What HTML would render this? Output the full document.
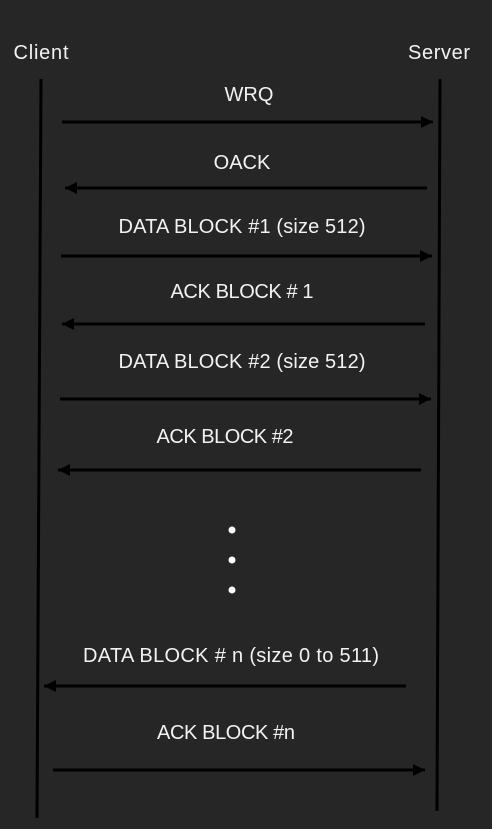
<!DOCTYPE html>
<html><head><style>
html,body{margin:0;padding:0;background:#262626;}
svg{display:block;}
text{font-family:"Liberation Sans",sans-serif;font-size:20px;fill:#f2f2f2;text-anchor:middle;}
</style></head><body>
<svg width="492" height="829" viewBox="0 0 492 829">
<defs>
<marker id="a" viewBox="0 0 10 10" refX="10" refY="5" markerWidth="4" markerHeight="4" orient="auto"><path d="M0,0 L10,5 L0,10 z" fill="#000"/></marker>
</defs>
<text x="41" y="59" textLength="55">Client</text>
<text x="439" y="59" textLength="62">Server</text>
<line x1="41" y1="79" x2="37" y2="818" stroke="#000" stroke-width="3"/>
<line x1="440" y1="79" x2="437" y2="811" stroke="#000" stroke-width="3"/>
<g stroke="#000" stroke-width="3" marker-end="url(#a)">
<line x1="62" y1="122" x2="433" y2="122"/>
<line x1="427" y1="188" x2="65" y2="188"/>
<line x1="61" y1="256" x2="432" y2="256"/>
<line x1="425" y1="324" x2="62" y2="324"/>
<line x1="60" y1="399" x2="431" y2="399"/>
<line x1="421" y1="470" x2="58" y2="470"/>
<line x1="406" y1="686" x2="44" y2="686"/>
<line x1="53" y1="770" x2="425" y2="770"/>
</g>
<text x="249" y="101">WRQ</text>
<text x="242" y="169">OACK</text>
<text x="242" y="233" textLength="247">DATA BLOCK #1 (size 512)</text>
<text x="242" y="298" textLength="143">ACK BLOCK # 1</text>
<text x="242" y="368" textLength="247">DATA BLOCK #2 (size 512)</text>
<text x="225" y="443" textLength="137">ACK BLOCK #2</text>
<g fill="#fff"><circle cx="232" cy="530" r="3.5"/><circle cx="232" cy="560" r="3.5"/><circle cx="232" cy="590" r="3.5"/></g>
<text x="231" y="662" textLength="296">DATA BLOCK # n (size 0 to 511)</text>
<text x="226" y="739" textLength="138">ACK BLOCK #n</text>
</svg>
</body></html>
